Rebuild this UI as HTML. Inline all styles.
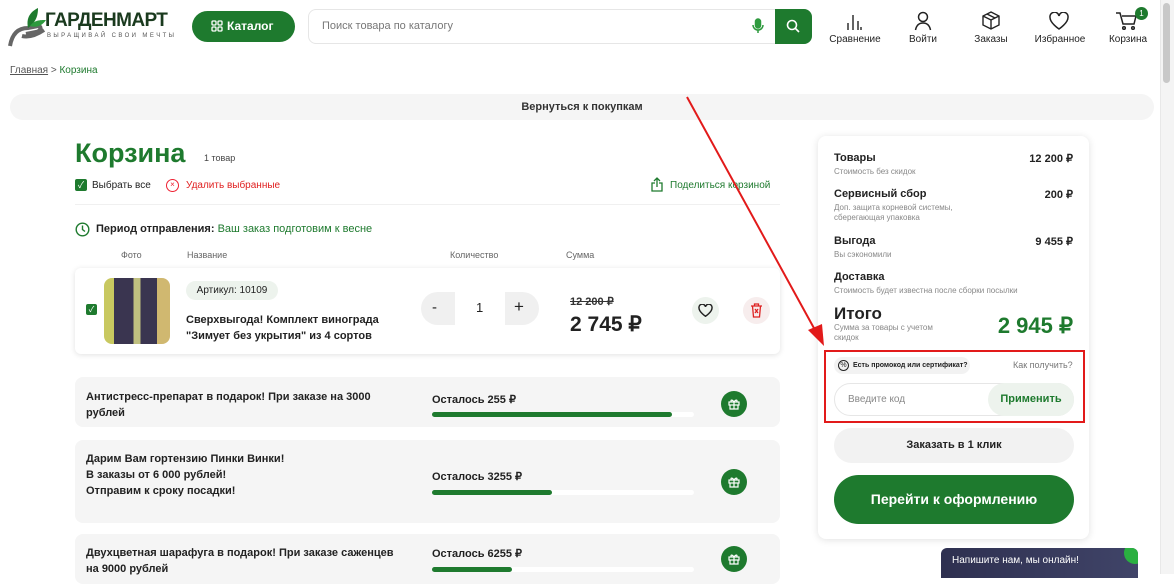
<!DOCTYPE html>
<html><head><meta charset="utf-8"><style>
*{box-sizing:border-box;margin:0;padding:0}
body{width:1174px;height:574px;overflow:hidden;background:#fff;font-family:"Liberation Sans","Noto Sans CJK SC",sans-serif;color:#222;position:relative}
.a{position:absolute}
.g{color:#1e7a2e}
.b{font-weight:bold}
.card{background:#f5f5f5;border-radius:8px}
.ic{font-size:10px;text-align:center;color:#222}
.gift{width:26px;height:26px;border-radius:50%;background:#1e7a2e}
</style></head><body>
<!-- header -->
<svg class="a" style="left:8px;top:6px" width="40" height="42" viewBox="0 0 40 42"><path d="M2 40 C4 28 10 22 20 22 L30 20 C34 20 33 25 28 26 L18 28 M14 30 C22 32 30 28 36 24" stroke="#666" stroke-width="4" fill="none"/><path d="M20 22 C18 12 22 6 30 2 C30 10 28 16 20 22Z" fill="#1e7a2e"/><path d="M22 20 C26 14 32 14 38 14 C34 20 28 22 22 20Z" fill="#2e9a3e"/></svg>
<div class="a b" style="left:45px;top:10px;font-size:19px;color:#1a3a1e;letter-spacing:-0.6px">ГАРДЕНМАРТ</div>
<div class="a" style="left:47px;top:33px;font-size:6px;color:#555;letter-spacing:2.4px">ВЫРАЩИВАЙ СВОИ МЕЧТЫ</div>
<div class="a" style="left:192px;top:11px;width:103px;height:31px;background:#1e7a2e;border-radius:16px;color:#fff;font-size:12px;font-weight:bold;line-height:31px;padding-left:35px">Каталог</div>
<svg class="a" style="left:211px;top:20px" width="12" height="12" viewBox="0 0 12 12" fill="none" stroke="#fff" stroke-width="1.3"><rect x="1" y="1" width="4" height="4" rx="1"/><rect x="7" y="1" width="4" height="4" rx="1"/><rect x="1" y="7" width="4" height="4" rx="1"/><rect x="7" y="7" width="4" height="4" rx="1"/></svg>
<div class="a" style="left:308px;top:9px;width:504px;height:35px;border:1px solid #e6e6e6;border-radius:8px"></div>
<div class="a" style="left:322px;top:20px;font-size:11px;color:#777">Поиск товара по каталогу</div>
<svg class="a" style="left:752px;top:18px" width="12" height="16" viewBox="0 0 12 16" fill="none" stroke="#2e9a3e" stroke-width="1.5"><rect x="3.5" y="1" width="5" height="9" rx="2.5" fill="#2e9a3e"/><path d="M1 7a5 5 0 0 0 10 0M6 12v3"/></svg>
<div class="a" style="left:775px;top:9px;width:37px;height:35px;background:#1e7a2e;border-radius:0 8px 8px 0"></div>
<svg class="a" style="left:786px;top:19px" width="14" height="14" viewBox="0 0 14 14" fill="none" stroke="#fff" stroke-width="1.6"><circle cx="6" cy="6" r="4.5"/><path d="M9.5 9.5L13 13"/></svg>
<svg class="a" style="left:846px;top:13px" width="16" height="18" viewBox="0 0 16 18" stroke="#222" stroke-width="1.4"><path d="M2 10v7M7 2v15M12 8v9M15 14v3"/></svg>
<div class="a ic" style="left:826px;top:34px;width:58px">Сравнение</div>
<svg class="a" style="left:914px;top:11px" width="18" height="20" viewBox="0 0 18 20" fill="none" stroke="#222" stroke-width="1.5"><circle cx="9" cy="6" r="4.5"/><path d="M1.5 19c1-5 4-7 7.5-7s6.5 2 7.5 7"/></svg>
<div class="a ic" style="left:900px;top:34px;width:46px">Войти</div>
<svg class="a" style="left:982px;top:11px" width="18" height="20" viewBox="0 0 18 20" fill="none" stroke="#222" stroke-width="1.4"><path d="M9 1l8 4v9l-8 4-8-4V5zM1 5l8 4 8-4M9 9v9M5 3l8 4"/></svg>
<div class="a ic" style="left:968px;top:34px;width:46px">Заказы</div>
<svg class="a" style="left:1049px;top:12px" width="20" height="18" viewBox="0 0 20 18" fill="none" stroke="#222" stroke-width="1.5"><path d="M10 17S1 11 1 5.5A4.5 4.5 0 0 1 10 4a4.5 4.5 0 0 1 9 1.5C19 11 10 17 10 17z"/></svg>
<div class="a ic" style="left:1032px;top:34px;width:56px">Избранное</div>
<svg class="a" style="left:1116px;top:12px" width="22" height="18" viewBox="0 0 22 18" fill="none" stroke="#222" stroke-width="1.5"><path d="M0 1h4l3 11h11l2-8H6"/><circle cx="8" cy="16" r="1.3"/><circle cx="17" cy="16" r="1.3"/></svg>
<div class="a" style="left:1135px;top:7px;width:13px;height:13px;border-radius:50%;background:#1e7a2e;color:#fff;font-size:8px;text-align:center;line-height:13px">1</div>
<div class="a ic" style="left:1104px;top:34px;width:48px">Корзина</div>
<div class="a" style="left:1160px;top:0;width:14px;height:574px;background:#f4f4f4;border-left:1px solid #e8e8e8"></div>
<div class="a" style="left:1163px;top:3px;width:7px;height:80px;background:#c8c8c8;border-radius:4px"></div>
<!-- breadcrumbs -->
<div class="a" style="left:10px;top:65px;font-size:10px;color:#555"><span style="text-decoration:underline">Главная</span> &gt; <span class="g">Корзина</span></div>
<div class="a card" style="left:10px;top:94px;width:1144px;height:26px;border-radius:13px;text-align:center;font-size:11px;line-height:26px;font-weight:bold;color:#333">Вернуться к покупкам</div>
<!-- title -->
<div class="a b g" style="left:75px;top:138px;font-size:27px">Корзина</div>
<div class="a" style="left:204px;top:153px;font-size:9px;color:#444">1 товар</div>
<div class="a" style="left:75px;top:179px;width:12px;height:12px;background:#1e7a2e;border-radius:2px;color:#fff;font-size:9px;text-align:center;line-height:12px">✓</div>
<div class="a" style="left:92px;top:180px;font-size:10px">Выбрать все</div>
<div class="a" style="left:166px;top:179px;width:13px;height:13px;border:1.3px solid #e23;border-radius:50%;color:#e23;font-size:8px;text-align:center;line-height:10px">×</div>
<div class="a" style="left:186px;top:180px;font-size:10px;color:#e02020">Удалить выбранные</div>
<svg class="a" style="left:651px;top:177px" width="12" height="15" viewBox="0 0 12 15" fill="none" stroke="#1e7a2e" stroke-width="1.3"><path d="M4 6H1v8h10V6H8M6 10V1M3 4l3-3 3 3"/></svg>
<div class="a g" style="left:670px;top:180px;font-size:10px">Поделиться корзиной</div>
<div class="a" style="left:75px;top:204px;width:705px;height:1px;background:#f0f0f0"></div>
<svg class="a" style="left:75px;top:222px" width="15" height="15" viewBox="0 0 15 15" fill="none" stroke="#1e7a2e" stroke-width="1.4"><circle cx="7.5" cy="7.5" r="6.3"/><path d="M7.5 3.5v4l2.5 2"/></svg>
<div class="a" style="left:96px;top:223px;font-size:11px"><b style="color:#222">Период отправления:</b> <span class="g">Ваш заказ подготовим к весне</span></div>
<div class="a" style="left:121px;top:250px;font-size:9px;color:#666">Фото</div>
<div class="a" style="left:187px;top:250px;font-size:9px;color:#666">Название</div>
<div class="a" style="left:450px;top:250px;font-size:9px;color:#666">Количество</div>
<div class="a" style="left:566px;top:250px;font-size:9px;color:#666">Сумма</div>
<!-- item -->
<div class="a" style="left:75px;top:268px;width:705px;height:86px;background:#fff;border-radius:6px;box-shadow:0 1px 6px rgba(0,0,0,.12)"></div>
<div class="a" style="left:86px;top:304px;width:11px;height:11px;background:#1e7a2e;border-radius:2px;color:#fff;font-size:8px;text-align:center;line-height:11px">✓</div>
<div class="a" style="left:104px;top:278px;width:66px;height:66px;border-radius:8px;background:linear-gradient(90deg,#c8c860 0 15%,#3a3550 15% 45%,#c0c080 45% 55%,#3a3550 55% 80%,#d0b870 80%);"></div>
<div class="a" style="left:186px;top:281px;width:92px;height:19px;background:#edf3ed;border-radius:10px;font-size:10px;text-align:center;line-height:19px">Артикул: 10109</div>
<div class="a b" style="left:186px;top:312px;font-size:11px;line-height:16px">Сверхвыгода! Комплект винограда<br>"Зимует без укрытия" из 4 сортов</div>
<div class="a" style="left:421px;top:292px;width:118px;height:33px;background:#f0f0f0;border-radius:17px"></div>
<div class="a" style="left:455px;top:292px;width:50px;height:33px;background:#fff"></div>
<div class="a" style="left:432px;top:299px;font-size:15px">-</div>
<div class="a" style="left:476px;top:300px;font-size:13px">1</div>
<div class="a" style="left:514px;top:297px;font-size:17px">+</div>
<div class="a b" style="left:570px;top:295px;font-size:11px;color:#333;text-decoration:line-through">12 200 ₽</div>
<div class="a b" style="left:570px;top:312px;font-size:21px">2 745 ₽</div>
<div class="a" style="left:692px;top:297px;width:27px;height:27px;border-radius:50%;background:#edf3ed"></div>
<svg class="a" style="left:698px;top:304px" width="15" height="13" viewBox="0 0 20 18" fill="none" stroke="#222" stroke-width="2"><path d="M10 17S1 11 1 5.5A4.5 4.5 0 0 1 10 4a4.5 4.5 0 0 1 9 1.5C19 11 10 17 10 17z"/></svg>
<div class="a" style="left:743px;top:297px;width:27px;height:27px;border-radius:50%;background:#f7eded"></div>
<svg class="a" style="left:750px;top:303px" width="13" height="15" viewBox="0 0 13 15" fill="none" stroke="#d22" stroke-width="1.3"><path d="M1 3h11M4.5 3V1h4v2M2.5 3l1 11h6l1-11M5 6l3 4M8 6l-3 4"/></svg>
<!-- gifts -->
<div class="a card" style="left:75px;top:377px;width:705px;height:50px"></div>
<div class="a b" style="left:86px;top:389px;font-size:11px;line-height:16px">Антистресс-препарат в подарок! При заказе на 3000<br>рублей</div>
<div class="a card" style="left:75px;top:440px;width:705px;height:83px"></div>
<div class="a b" style="left:86px;top:451px;font-size:11px;line-height:16px">Дарим Вам гортензию Пинки Винки!<br>В заказы от 6 000 рублей!<br>Отправим к сроку посадки!</div>
<div class="a card" style="left:75px;top:534px;width:705px;height:50px"></div>
<div class="a b" style="left:86px;top:545px;font-size:11px;line-height:16px">Двухцветная шарафуга в подарок! При заказе саженцев<br>на 9000 рублей</div>
<div class="a b" style="left:432px;top:393px;font-size:11px">Осталось 255 ₽</div>
<div class="a" style="left:432px;top:412px;width:262px;height:5px;background:#fff;border-radius:3px"><div style="width:240px;height:5px;background:#1e7a2e;border-radius:3px"></div></div>
<div class="a b" style="left:432px;top:470px;font-size:11px">Осталось 3255 ₽</div>
<div class="a" style="left:432px;top:490px;width:262px;height:5px;background:#fff;border-radius:3px"><div style="width:120px;height:5px;background:#1e7a2e;border-radius:3px"></div></div>
<div class="a b" style="left:432px;top:547px;font-size:11px">Осталось 6255 ₽</div>
<div class="a" style="left:432px;top:567px;width:262px;height:5px;background:#fff;border-radius:3px"><div style="width:80px;height:5px;background:#1e7a2e;border-radius:3px"></div></div>
<div class="a gift" style="left:721px;top:391px"></div>
<div class="a gift" style="left:721px;top:469px"></div>
<div class="a gift" style="left:721px;top:546px"></div>
<svg class="a" style="left:728px;top:398px" width="12" height="12" viewBox="0 0 12 12" fill="none" stroke="#fff" stroke-width="1.2"><rect x="1" y="4" width="10" height="3"/><path d="M2 7v4h8V7M6 4v7M6 4C4 1 2 2 3.5 4M6 4c2-3 4-2 2.5 0"/></svg>
<svg class="a" style="left:728px;top:476px" width="12" height="12" viewBox="0 0 12 12" fill="none" stroke="#fff" stroke-width="1.2"><rect x="1" y="4" width="10" height="3"/><path d="M2 7v4h8V7M6 4v7M6 4C4 1 2 2 3.5 4M6 4c2-3 4-2 2.5 0"/></svg>
<svg class="a" style="left:728px;top:553px" width="12" height="12" viewBox="0 0 12 12" fill="none" stroke="#fff" stroke-width="1.2"><rect x="1" y="4" width="10" height="3"/><path d="M2 7v4h8V7M6 4v7M6 4C4 1 2 2 3.5 4M6 4c2-3 4-2 2.5 0"/></svg>
<!-- summary -->
<div class="a" style="left:818px;top:136px;width:271px;height:403px;background:#fff;border-radius:8px;box-shadow:0 1px 8px rgba(0,0,0,.12)"></div>
<div class="a b" style="left:834px;top:152px;font-size:11px">Товары</div><div class="a b" style="left:974px;width:99px;text-align:right;top:152px;font-size:11px">12 200 ₽</div>
<div class="a" style="left:834px;top:167px;font-size:8px;color:#888">Стоимость без скидок</div>
<div class="a b" style="left:834px;top:188px;font-size:11px">Сервисный сбор</div><div class="a b" style="left:974px;width:99px;text-align:right;top:188px;font-size:11px">200 ₽</div>
<div class="a" style="left:834px;top:203px;font-size:8px;color:#888;line-height:10px">Доп. защита корневой системы,<br>сберегающая упаковка</div>
<div class="a b" style="left:834px;top:235px;font-size:11px">Выгода</div><div class="a b" style="left:974px;width:99px;text-align:right;top:235px;font-size:11px">9 455 ₽</div>
<div class="a" style="left:834px;top:250px;font-size:8px;color:#888">Вы сэкономили</div>
<div class="a b" style="left:834px;top:271px;font-size:11px">Доставка</div>
<div class="a" style="left:834px;top:286px;font-size:8px;color:#888">Стоимость будет известна после сборки посылки</div>
<div class="a b" style="left:834px;top:304px;font-size:17px">Итого</div>
<div class="a" style="left:834px;top:323px;font-size:8px;color:#888;line-height:10px">Сумма за товары с учетом<br>скидок</div>
<div class="a b g" style="left:954px;width:119px;text-align:right;top:313px;font-size:22px">2 945 ₽</div>
<div class="a" style="left:824px;top:350px;width:261px;height:73px;border:2px solid #e21a1a"></div>
<div class="a" style="left:834px;top:357px;width:136px;height:17px;background:#f2f2f2;border-radius:9px;font-size:7px;font-weight:bold;line-height:17px;padding-left:19px">Есть промокод или сертификат?</div>
<div class="a" style="left:838px;top:360px;width:11px;height:11px;border:1.3px solid #222;border-radius:50%;font-size:7px;text-align:center;line-height:9px">%</div>
<div class="a" style="left:1013px;top:360px;font-size:9px;color:#777">Как получить?</div>
<div class="a" style="left:834px;top:383px;width:240px;height:33px;border:1px solid #e6e6e6;border-radius:17px"></div>
<div class="a" style="left:848px;top:394px;font-size:10px;color:#888">Введите код</div>
<div class="a b" style="left:988px;top:383px;width:86px;height:33px;background:#edf3ed;border-radius:17px;text-align:center;line-height:33px;font-size:11px;color:#1e7a2e">Применить</div>
<div class="a b" style="left:834px;top:428px;width:240px;height:35px;background:#f2f2f2;border-radius:18px;text-align:center;line-height:35px;font-size:11px">Заказать в 1 клик</div>
<div class="a b" style="left:834px;top:475px;width:240px;height:49px;background:#1e7a2e;border-radius:25px;text-align:center;line-height:49px;font-size:14px;color:#fff">Перейти к оформлению</div>
<!-- chat -->
<div class="a" style="left:941px;top:548px;width:197px;height:30px;background:linear-gradient(90deg,#2e3050,#404468);border-radius:6px 6px 0 0;color:#fff;font-size:10px;line-height:26px;padding-left:11px;overflow:hidden">Напишите нам, мы онлайн!<div style="position:absolute;right:-8px;top:-6px;width:22px;height:22px;border-radius:50%;background:#2ab040"></div></div>
<!-- arrow -->
<svg class="a" style="left:0;top:0" width="1174" height="574"><line x1="687" y1="97" x2="815" y2="330" stroke="#e21a1a" stroke-width="2"/><path d="M824 346 L808 330 L822 324 Z" fill="#e21a1a"/></svg>
</body></html>
